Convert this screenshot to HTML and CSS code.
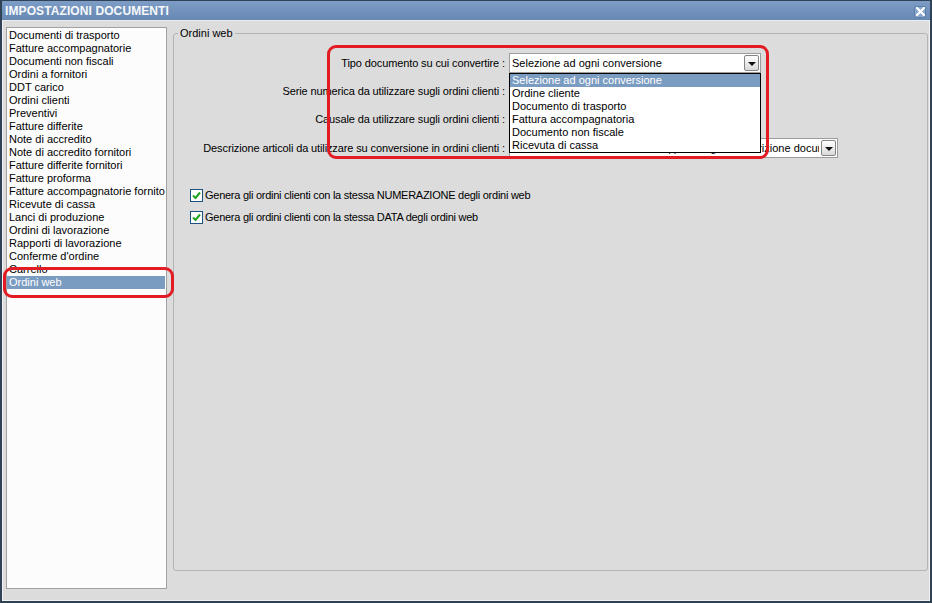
FILE: index.html
```html
<!DOCTYPE html>
<html lang="it">
<head>
  <meta charset="UTF-8" />
  <title>Impostazioni documenti</title>
  <link rel="stylesheet" href="styles.css">
</head>
<body>

  <div class="window">
    <div class="titlebar">
      <span class="title">IMPOSTAZIONI DOCUMENTI</span>
      <span class="close">
        <svg width="9" height="9" viewBox="0 0 9 9">
          <path d="M1 1 L8 8 M8 1 L1 8" stroke="#ffffff" stroke-width="2.2" stroke-linecap="square" />
        </svg>
      </span>
    </div>

    <div class="content">
      <ul class="doclist">
        <li>Documenti di trasporto</li>
        <li>Fatture accompagnatorie</li>
        <li>Documenti non fiscali</li>
        <li>Ordini a fornitori</li>
        <li>DDT carico</li>
        <li>Ordini clienti</li>
        <li>Preventivi</li>
        <li>Fatture differite</li>
        <li>Note di accredito</li>
        <li>Note di accredito fornitori</li>
        <li>Fatture differite fornitori</li>
        <li>Fatture proforma</li>
        <li>Fatture accompagnatorie fornitori</li>
        <li>Ricevute di cassa</li>
        <li>Lanci di produzione</li>
        <li>Ordini di lavorazione</li>
        <li>Rapporti di lavorazione</li>
        <li>Conferme d'ordine</li>
        <li>Carrello</li>
        <li class="selected">Ordini web</li>
      </ul>

      <fieldset class="group">
        <legend>Ordini web</legend>

        <div class="form">
          <label>Tipo documento su cui convertire :</label>
          <div class="combo">
            <span class="combo-text">Selezione ad ogni conversione</span>
            <span class="combo-btn"></span>
            <ul class="droplist">
              <li class="selected">Selezione ad ogni conversione</li>
              <li>Ordine cliente</li>
              <li>Documento di trasporto</li>
              <li>Fattura accompagnatoria</li>
              <li>Documento non fiscale</li>
              <li>Ricevuta di cassa</li>
            </ul>
          </div>

          <label>Serie numerica da utilizzare sugli ordini clienti :</label>
          <div class="combo">
            <span class="combo-text">Serie principale</span>
            <span class="combo-btn"></span>
          </div>

          <label>Causale da utilizzare sugli ordini clienti :</label>
          <div class="combo">
            <span class="combo-text">Vendita</span>
            <span class="combo-btn"></span>
          </div>

          <label class="last">Descrizione articoli da utilizzare su conversione in ordini clienti :</label>
          <div class="combo wide last">
            <span class="combo-text">Descrizione articolo ordine web | prima riga e descrizione documento</span>
            <span class="combo-btn"></span>
          </div>
        </div>

        <div class="checks">
          <div class="check-row"><span class="checkbox"><svg width="11" height="11" viewBox="0 0 11 11"><path d="M2 5.5 L4.5 8 L9 2.5" fill="none" stroke="#23a323" stroke-width="2" /></svg></span>Genera gli ordini clienti con la stessa NUMERAZIONE degli ordini web</div>
          <div class="check-row"><span class="checkbox"><svg width="11" height="11" viewBox="0 0 11 11"><path d="M2 5.5 L4.5 8 L9 2.5" fill="none" stroke="#23a323" stroke-width="2" /></svg></span>Genera gli ordini clienti con la stessa DATA degli ordini web</div>
        </div>
      </fieldset>
    </div>

    <!-- annotation marks drawn over the screenshot -->
    <div class="mark mark-combo"></div>
    <div class="mark mark-list"></div>
  </div>

</body>
</html>
```

FILE: styles.css
```css
* {
  box-sizing: border-box;
}

body {
  margin: 0;
  background-color: #2f4256;
  font-family: "Liberation Sans", Arial, sans-serif;
  font-size: 11px;
  color: #000;
}

.window {
  position: relative;
  width: 932px;
  height: 603px;
  border: 2px solid #2f4256;
  border-top-width: 1px;
  display: flex;
  flex-direction: column;
  background-color: #dcdcdc;
}

.titlebar {
  height: 20px;
  flex-shrink: 0;
  display: flex;
  align-items: center;
  justify-content: space-between;
  padding: 0 4px 0 3px;
  background: linear-gradient(#7d9dc6, #6788b3);
  border-bottom: 1px solid #e9eef4;
}

.title {
  font-weight: bold;
  font-size: 12px;
  color: #f6f8fb;
  letter-spacing: 0.1px;
}

.close {
  width: 12px;
  height: 12px;
  margin-top: 2px;
  display: flex;
  align-items: center;
  justify-content: center;
  background: #8aa7cc;
  border: 1px solid #5f7fa8;
  border-radius: 2px;
}

.content {
  flex: 1;
  display: flex;
  align-items: flex-start;
  gap: 6px;
  padding: 6px 1px 10px 3px;
  border: 1px solid #f2f2f2;
  border-top: none;
}

.doclist {
  list-style: none;
  margin: 0;
  padding: 1px 1px 0 0;
  width: 161px;
  height: 562px;
  flex-shrink: 0;
  background: #fcfcfc;
  border: 1px solid #a0a0a0;
  overflow: hidden;
}

.doclist li {
  height: 13px;
  line-height: 13px;
  padding-left: 2px;
  white-space: nowrap;
  overflow: hidden;
}

.doclist li.selected,
.droplist li.selected {
  background: #7b9cc1;
  color: #ffffff;
}

.group {
  flex: 1;
  margin: 0;
  padding: 0;
  height: 544px;
  border: 1px solid #b4b4b4;
  border-radius: 3px;
}

.group legend {
  margin-left: 4px;
  padding: 0 2px;
  line-height: 13px;
}

.form {
  display: grid;
  grid-template-columns: 331px auto;
  column-gap: 4px;
  row-gap: 8px;
  align-items: center;
  margin-top: 13px;
}

.form label {
  text-align: right;
  white-space: nowrap;
  letter-spacing: -0.12px;
}

.form .last {
  margin-top: 1px;
}

.combo {
  position: relative;
  width: 252px;
  height: 20px;
  background: #ffffff;
  border: 1px solid #9c9c9c;
  display: flex;
  align-items: center;
  padding-left: 2px;
}

.combo.wide {
  width: 329px;
}

.combo-text {
  flex: 1;
  white-space: nowrap;
  overflow: hidden;
}

.combo-btn {
  width: 15px;
  height: 16px;
  margin: 0 1px 0 2px;
  flex-shrink: 0;
  border: 1px solid #858585;
  border-radius: 2px;
  background: linear-gradient(#ffffff, #d9d9d9);
  display: flex;
  align-items: center;
  justify-content: center;
}

.combo-btn::after {
  content: "";
  border-left: 4px solid transparent;
  border-right: 4px solid transparent;
  border-top: 4px solid #111;
  margin-top: 1px;
}

.droplist {
  position: absolute;
  top: 19px;
  left: -1px;
  width: 252px;
  z-index: 5;
  list-style: none;
  margin: 0;
  padding: 0;
  background: #ffffff;
  border: 1px solid #000000;
}

.droplist li {
  height: 13px;
  line-height: 13px;
  padding-left: 2px;
  white-space: nowrap;
}

.checks {
  margin: 31px 0 0 16px;
  display: flex;
  flex-direction: column;
  gap: 9px;
}

.check-row {
  display: flex;
  align-items: center;
  gap: 2px;
  line-height: 13px;
  letter-spacing: -0.26px;
}

.checkbox {
  width: 13px;
  height: 13px;
  border: 1px solid #1c5180;
  background: #ffffff;
  display: flex;
  align-items: center;
  justify-content: center;
}

.mark {
  position: absolute;
  border: 3px solid #e31b23;
  border-radius: 9px;
  z-index: 10;
}

.mark-combo {
  left: 325px;
  top: 44px;
  width: 442px;
  height: 114px;
}

.mark-list {
  left: 1px;
  top: 266px;
  width: 171px;
  height: 31px;
}
```
